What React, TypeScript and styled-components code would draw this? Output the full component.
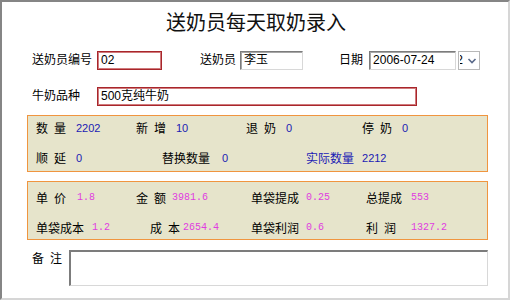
import React from "react";
import styled, { createGlobalStyle } from "styled-components";

const Global = createGlobalStyle`
  html, body { margin: 0; padding: 0; background: #ffffff; }
  body { font-family: "Noto Sans CJK SC", "Liberation Sans", sans-serif; }
  * { box-sizing: border-box; }
`;

const Frame = styled.div`
  width: 510px;
  height: 300px;
  border-style: solid;
  border-width: 2px 2px 2px 2px;
  border-color: #858585 #d6d6d6 #d6d6d6 #858585;
  background: #ffffff;
  display: flex;
  flex-direction: column;
  padding-top: 8px;
  overflow: hidden;
`;

const Title = styled.h1`
  margin: 0;
  height: 24px;
  line-height: 24px;
  font-size: 20px;
  font-weight: normal;
  text-align: center;
  color: #111;
  font-family: "Noto Sans CJK SC", sans-serif;
  padding-left: 2px;
`;

const FormRow = styled.div<{ mt: number }>`
  display: flex;
  align-items: flex-start;
  margin-top: ${(p) => p.mt}px;
  padding-left: 30px;
  height: 19px;
`;

const Label = styled.span<{ ml?: number; w?: number }>`
  font-size: 12px;
  line-height: 14px;
  padding-top: 1px;
  color: #000;
  white-space: pre;
  word-spacing: 3.3px;
  margin-left: ${(p) => p.ml ?? 0}px;
  ${(p) => (p.w ? `width: ${p.w}px;` : "")}
`;

const RedInput = styled.div<{ ml: number; w: number }>`
  margin-left: ${(p) => p.ml}px;
  width: ${(p) => p.w}px;
  height: 19px;
  border: 1px solid #a8262b;
  box-shadow: inset 0 0 0 1px #d07a7c;
  font-size: 12px;
  line-height: 17px;
  padding-left: 3px;
  color: #000;
  font-family: "Liberation Sans", "Noto Sans CJK SC", sans-serif;
  white-space: nowrap;
`;

const SunkenInput = styled.div<{ ml: number; w: number }>`
  margin-left: ${(p) => p.ml}px;
  width: ${(p) => p.w}px;
  height: 19px;
  border-style: solid;
  border-width: 1px;
  border-color: #7c7c7c #d8d8d8 #d8d8d8 #7c7c7c;
  box-shadow: inset 1px 1px 0 #a6a6a6;
  font-size: 12px;
  line-height: 17px;
  padding-left: 3px;
  color: #000;
  font-family: "Liberation Sans", "Noto Sans CJK SC", sans-serif;
  white-space: nowrap;
`;

const DropButton = styled.div`
  margin-left: 2px;
  width: 22px;
  height: 19px;
  border: 1px solid #b8b8b8;
  display: flex;
  align-items: center;
  overflow: hidden;
  font-size: 12px;
  font-family: "Liberation Sans", sans-serif;
  color: #000;
`;

const Clip = styled.span`
  display: inline-block;
  width: 3px;
  overflow: hidden;
  direction: rtl;
  line-height: 17px;
  margin-left: 1px;
`;

const Panel = styled.div<{ mt: number; pt: number; pb: number }>`
  margin-top: ${(p) => p.mt}px;
  margin-left: 25px;
  width: 461px;
  background: #e6e4cb;
  border: 1px solid #f0953f;
  padding: ${(p) => p.pt}px 0 ${(p) => p.pb}px 8px;
  display: flex;
  flex-direction: column;
  gap: 14px;
`;

const PanelRow = styled.div`
  display: flex;
  align-items: center;
  height: 16px;
`;

const Cell = styled.div<{ w?: number; gap: number }>`
  display: flex;
  align-items: center;
  gap: ${(p) => p.gap}px;
  ${(p) => (p.w ? `width: ${p.w}px; flex: none;` : "flex: 1;")}
`;

const CellLabel = styled.span<{ blue?: boolean }>`
  font-size: 12px;
  line-height: 16px;
  white-space: pre;
  word-spacing: 3.3px;
  color: ${(p) => (p.blue ? "#1a1ab4" : "#000")};
`;

const BlueNum = styled.span`
  font-family: "Liberation Sans", sans-serif;
  font-size: 11px;
  line-height: 16px;
  color: #1a1ab4;
`;

const PinkNum = styled.span`
  font-family: "Liberation Mono", monospace;
  font-size: 10px;
  line-height: 16px;
  color: #e03ce0;
`;

const NoteRow = styled.div`
  display: flex;
  align-items: flex-start;
  margin-top: 10px;
  padding-left: 30px;
`;

const NoteBox = styled.div`
  margin-left: 7px;
  width: 419px;
  height: 36px;
  border-style: solid;
  border-width: 2px 1px 1px 2px;
  border-color: #7c7c7c #d8d8d8 #d8d8d8 #7c7c7c;
  background: #fff;
`;

const Chevron = () => (
  <svg width="12" height="10" viewBox="0 0 12 10" style={{ marginLeft: 3 }}>
    <path d="M2.5 3 L6 6.5 L9.5 3" stroke="#5a6a8a" strokeWidth="1.6" fill="none" />
  </svg>
);

export default function App() {
  return (
    <>
      <Global />
      <Frame>
        <Title>送奶员每天取奶录入</Title>
        <FormRow mt={17}>
          <Label>送奶员编号</Label>
          <RedInput ml={5} w={65}>02</RedInput>
          <Label ml={38}>送奶员</Label>
          <SunkenInput ml={4} w={63}>李玉</SunkenInput>
          <Label ml={36}>日期</Label>
          <SunkenInput ml={6} w={87}>2006-07-24</SunkenInput>
          <DropButton>
            <Clip>2</Clip>
            <Chevron />
          </DropButton>
        </FormRow>
        <FormRow mt={17}>
          <Label w={65}>牛奶品种</Label>
          <RedInput ml={0} w={320}>500克纯牛奶</RedInput>
        </FormRow>
        <Panel mt={9} pt={4} pb={5}>
          <PanelRow>
            <Cell w={100} gap={10}>
              <CellLabel>数 量</CellLabel>
              <BlueNum>2202</BlueNum>
            </Cell>
            <Cell w={110} gap={10}>
              <CellLabel>新 增</CellLabel>
              <BlueNum>10</BlueNum>
            </Cell>
            <Cell w={116} gap={10}>
              <CellLabel>退 奶</CellLabel>
              <BlueNum>0</BlueNum>
            </Cell>
            <Cell gap={10}>
              <CellLabel>停 奶</CellLabel>
              <BlueNum>0</BlueNum>
            </Cell>
          </PanelRow>
          <PanelRow>
            <Cell w={126} gap={10}>
              <CellLabel>顺 延</CellLabel>
              <BlueNum>0</BlueNum>
            </Cell>
            <Cell w={144} gap={12}>
              <CellLabel>替换数量</CellLabel>
              <BlueNum>0</BlueNum>
            </Cell>
            <Cell gap={8}>
              <CellLabel blue>实际数量</CellLabel>
              <BlueNum>2212</BlueNum>
            </Cell>
          </PanelRow>
        </Panel>
        <Panel mt={9} pt={8} pb={3}>
          <PanelRow>
            <Cell w={100} gap={11}>
              <CellLabel>单 价</CellLabel>
              <PinkNum>1.8</PinkNum>
            </Cell>
            <Cell w={115} gap={6}>
              <CellLabel>金 额</CellLabel>
              <PinkNum>3981.6</PinkNum>
            </Cell>
            <Cell w={115} gap={7}>
              <CellLabel>单袋提成</CellLabel>
              <PinkNum>0.25</PinkNum>
            </Cell>
            <Cell gap={9}>
              <CellLabel>总提成</CellLabel>
              <PinkNum>553</PinkNum>
            </Cell>
          </PanelRow>
          <PanelRow>
            <Cell w={114} gap={8}>
              <CellLabel>单袋成本</CellLabel>
              <PinkNum>1.2</PinkNum>
            </Cell>
            <Cell w={101} gap={3}>
              <CellLabel>成 本</CellLabel>
              <PinkNum>2654.4</PinkNum>
            </Cell>
            <Cell w={115} gap={7}>
              <CellLabel>单袋利润</CellLabel>
              <PinkNum>0.6</PinkNum>
            </Cell>
            <Cell gap={15}>
              <CellLabel>利 润</CellLabel>
              <PinkNum>1327.2</PinkNum>
            </Cell>
          </PanelRow>
        </Panel>
        <NoteRow>
          <Label>备 注</Label>
          <NoteBox />
        </NoteRow>
      </Frame>
    </>
  );
}
